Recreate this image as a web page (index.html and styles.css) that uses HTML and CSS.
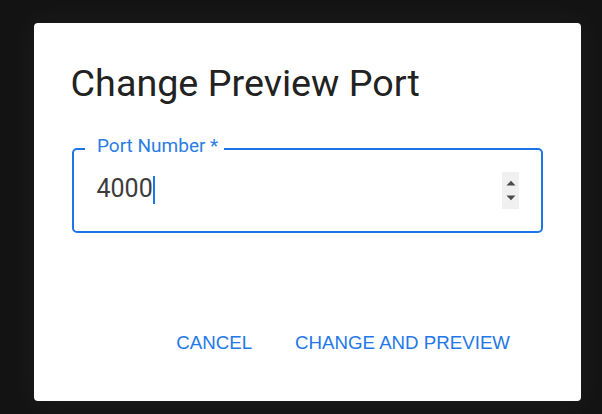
FILE: index.html
```html
<!DOCTYPE html>
<html lang="en">
<head>
<meta charset="utf-8">
<title>Change Preview Port</title>
<link rel="stylesheet" href="styles.css">
</head>
<body>
<div class="dialog" role="dialog" aria-labelledby="dlg-title">
  <h2 class="title" id="dlg-title">Change Preview Port</h2>
  <div class="field">
    <span class="label">Port Number *</span>
    <div class="input-row">
      <div class="value">4000<span class="caret"></span></div>
      <div class="spinner">
        <svg class="arrow" width="10" height="6" viewBox="0 0 10 6"><path d="M0.5 5.5 L5 0.8 L9.5 5.5 Z" fill="#4a4a4a"/></svg>
        <svg class="arrow" width="10" height="6" viewBox="0 0 10 6"><path d="M0.5 0.5 L5 5.2 L9.5 0.5 Z" fill="#4a4a4a"/></svg>
      </div>
    </div>
  </div>
  <div class="actions">
    <button class="btn">CANCEL</button>
    <button class="btn">CHANGE AND PREVIEW</button>
  </div>
</div>
</body>
</html>
```

FILE: styles.css
```css
html, body {
  margin: 0;
  padding: 0;
  background: #131313;
}

body {
  width: 602px;
  height: 414px;
  box-sizing: border-box;
  padding: 23px 0 0 34px;
  overflow: hidden;
}

.dialog {
  width: 547px;
  height: 378px;
  box-sizing: border-box;
  background: #ffffff;
  border-radius: 4px;
  box-shadow: 0 0 30px 6px rgba(255, 255, 255, 0.035);
  display: flex;
  flex-direction: column;
}

.title {
  margin: 0;
  padding: 38.2px 38px 0 36.6px;
  font-family: Roboto, "Noto Sans", sans-serif;
  font-weight: 400;
  font-size: 37.7px;
  line-height: 44px;
  color: #222222;
}

.field {
  position: relative;
  margin: 42.8px 38px 0 38px;
  height: 85px;
  box-sizing: border-box;
  border: 2px solid #1c74e9;
  border-radius: 5px;
}

.label {
  position: absolute;
  left: 11px;
  top: -15.2px;
  padding: 0 6px 0 12px;
  background: #ffffff;
  font-family: Roboto, "Noto Sans", sans-serif;
  font-size: 19px;
  line-height: 22px;
  color: #2a7de6;
  white-space: nowrap;
}

.input-row {
  display: flex;
  align-items: flex-start;
  padding: 0 22px 0 22.5px;
}

.value {
  flex: 1;
  margin-top: 24px;
  font-family: Roboto, "Noto Sans", sans-serif;
  font-size: 25px;
  line-height: 30px;
  color: #3c3c3c;
}

.caret {
  display: inline-block;
  width: 1.5px;
  height: 28px;
  margin-left: 0.5px;
  vertical-align: -7px;
  background: #1c74e9;
}

.spinner {
  margin-top: 22px;
  width: 17px;
  height: 37px;
  background: #f0f0f0;
  display: flex;
  flex-direction: column;
  align-items: center;
  justify-content: center;
  gap: 9px;
}

.arrow {
  display: block;
}

.actions {
  margin-top: 88.6px;
  display: flex;
  justify-content: flex-end;
  gap: 11px;
  padding-right: 55px;
}

.btn {
  border: none;
  background: transparent;
  padding: 10px 16px;
  margin: 0;
  font-family: "Liberation Sans", Arial, sans-serif;
  font-size: 18.7px;
  line-height: 22px;
  color: #2378e8;
  cursor: pointer;
}
```
